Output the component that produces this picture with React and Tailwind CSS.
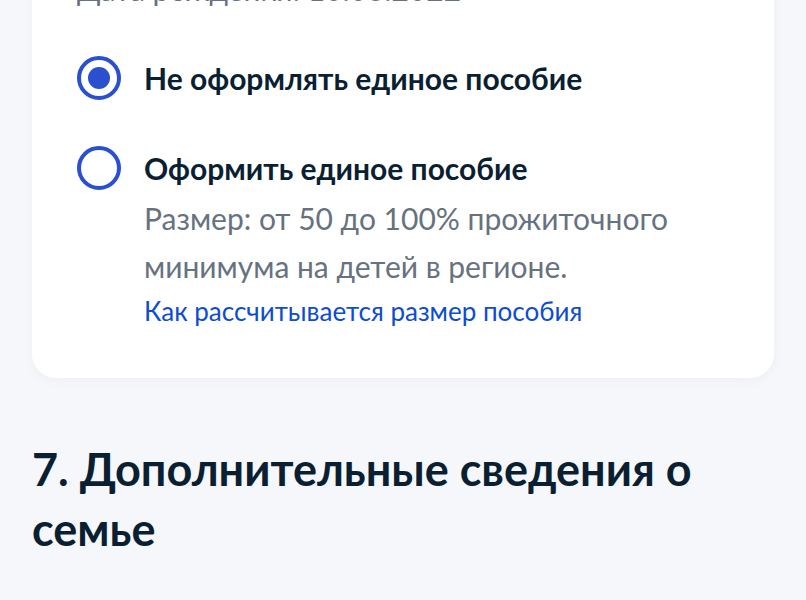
export default function App() {
  return (
    <div
      className="min-h-[600px] bg-[#f6f7fa] overflow-hidden"
      style={{ fontFamily: 'Lato, "Noto Sans", sans-serif' }}
    >
      <div className="mx-8 -mt-[35px] bg-white rounded-[24px] px-[45px] pb-[47px] shadow-[0_2px_12px_rgba(11,31,51,0.04)]">
        <p className="text-[30px] leading-[48px] text-[#66727f]">Дата рождения: 10.03.2022</p>

        <div className="mt-[43px] flex items-center gap-[23px]">
          <span className="w-[44px] h-[44px] rounded-full border-[4px] border-[#2a4fcf] flex items-center justify-center shrink-0">
            <span className="w-[22px] h-[22px] rounded-full bg-[#2a4fcf]" />
          </span>
          <span className="text-[30px] leading-[44px] font-bold text-[#0b1f33]">
            Не оформлять единое пособие
          </span>
        </div>

        <div className="mt-[46px] flex items-start gap-[23px]">
          <span className="w-[44px] h-[44px] rounded-full border-[4px] border-[#2a4fcf] shrink-0" />
          <div>
            <p className="text-[30px] leading-[44px] font-bold text-[#0b1f33]">Оформить единое пособие</p>
            <p className="mt-[4px] text-[30px] leading-[48px] text-[#66727f]">
              Размер: от 50 до 100% прожиточного
              <br />
              минимума на детей в регионе.
            </p>
            <p className="mt-[1px] text-[26px] leading-[40px] text-[#0d4cd3]">Как рассчитывается размер пособия</p>
          </div>
        </div>
      </div>

      <h2 className="mt-[61px] mx-8 text-[45px] leading-[60px] font-bold text-[#0b1f33]">
        7. Дополнительные сведения о семье
      </h2>
    </div>
  );
}
